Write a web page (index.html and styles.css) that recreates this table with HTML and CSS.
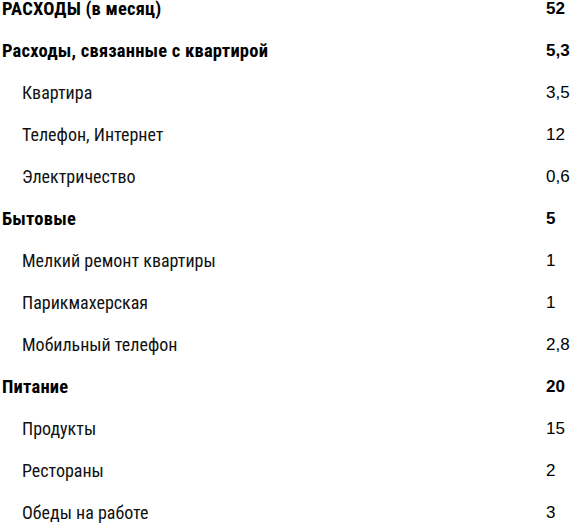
FILE: index.html
```html
<!DOCTYPE html>
<html lang="ru">
<head>
<meta charset="utf-8">
<link rel="stylesheet" href="styles.css">
</head>
<body>
<div class="list">
  <div class="row head"><span class="label">РАСХОДЫ (в месяц)</span><span class="num">52</span></div>
  <div class="row head"><span class="label">Расходы, связанные с квартирой</span><span class="num">5,3</span></div>
  <div class="row sub"><span class="label">Квартира</span><span class="num">3,5</span></div>
  <div class="row sub"><span class="label">Телефон, Интернет</span><span class="num">12</span></div>
  <div class="row sub"><span class="label">Электричество</span><span class="num">0,6</span></div>
  <div class="row head"><span class="label">Бытовые</span><span class="num">5</span></div>
  <div class="row sub"><span class="label">Мелкий ремонт квартиры</span><span class="num">1</span></div>
  <div class="row sub"><span class="label">Парикмахерская</span><span class="num">1</span></div>
  <div class="row sub"><span class="label">Мобильный телефон</span><span class="num">2,8</span></div>
  <div class="row head"><span class="label">Питание</span><span class="num">20</span></div>
  <div class="row sub"><span class="label">Продукты</span><span class="num">15</span></div>
  <div class="row sub"><span class="label">Рестораны</span><span class="num">2</span></div>
  <div class="row sub"><span class="label">Обеды на работе</span><span class="num">3</span></div>
</div>
</body>
</html>
```
FILE: styles.css
```css
html, body {
  margin: 0;
  padding: 0;
  background: #fff;
  color: #000;
}
.list {
  display: flex;
  flex-direction: column;
}
.row {
  display: grid;
  grid-template-columns: 546px auto;
  height: 42px;
  line-height: 18px;
  align-items: start;
}
.label {
  font-family: "Roboto Condensed", "Liberation Sans Narrow", "DejaVu Sans Condensed", sans-serif;
  font-size: 18px;
  padding-left: 2px;
  color: #111;
}
.num {
  font-family: "Liberation Sans", Arial, sans-serif;
  font-size: 17px;
}
.head .label {
  font-weight: bold;
  font-size: 18.5px;
  letter-spacing: 0.2px;
  color: #000;
}
.head .num {
  font-weight: bold;
}
.sub .label {
  padding-left: 22px;
}
```
